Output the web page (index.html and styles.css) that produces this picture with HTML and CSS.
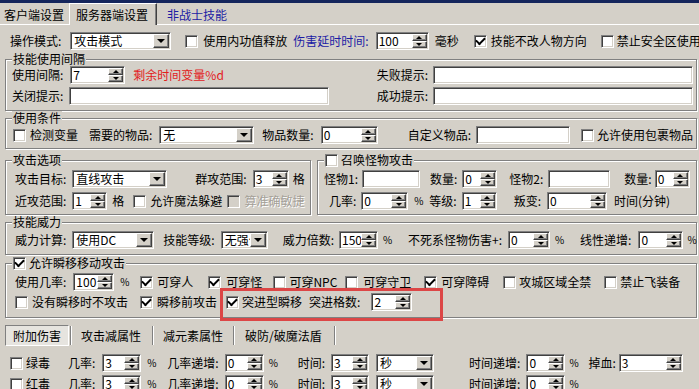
FILE: index.html
```html
<!DOCTYPE html>
<html lang="zh-CN">
<head>
<meta charset="utf-8">
<title>服务器端设置</title>
<link rel="stylesheet" href="styles.css">
</head>
<body>
<div class="win">
  <div class="topbar"></div>
  <div class="tabs">
    <div class="tab first">客户端设置</div>
    <div class="tab sel">服务器端设置</div>
    <div class="tab blue m10">非战士技能</div>
  </div>

  <div class="row r-top">
    <span class="m10">操作模式:</span>
    <div class="combo w101 m9"><span class="v">攻击模式</span><span class="db"></span></div>
    <span class="cb m14"></span><span class="m5">使用内功值释放</span>
    <span class="blue m6">伤害延时时间:</span>
    <div class="spin w53 m7"><span class="v">100</span><span class="sb"><i class="up"></i><i class="dn"></i></span></div>
    <span class="m6">毫秒</span>
    <span class="cb on m15"></span><span class="m4">技能不改人物方向</span>
    <span class="cb m14"></span><span class="m3">禁止安全区使用</span>
  </div>

  <div class="group g1">
    <div class="legend">技能使用间隔</div>
    <div class="row">
      <span class="m6">使用间隔:</span>
      <div class="spin w55 m7"><span class="v">7</span><span class="sb"><i class="up"></i><i class="dn"></i></span></div>
      <span class="red m8">剩余时间变量%d</span>
      <div class="right"><span>失败提示:</span><div class="field w260 m5"></div></div>
    </div>
    <div class="row mt3">
      <span class="m6">关闭提示:</span>
      <div class="field w260 m6"></div>
      <div class="right"><span>成功提示:</span><div class="field w260 m5"></div></div>
    </div>
  </div>

  <div class="group g2">
    <div class="legend">使用条件</div>
    <div class="row mt1">
      <span class="cb m7"></span><span class="m4">检测变量</span>
      <span class="m11">需要的物品:</span>
      <div class="combo w95 m7"><span class="v">无</span><span class="db"></span></div>
      <span class="m8">物品数量:</span>
      <div class="spin w57 m7"><span class="v">0</span><span class="sb"><i class="up"></i><i class="dn"></i></span></div>
      <span class="m30">自定义物品:</span>
      <div class="field w94 m5"></div>
      <span class="cb m11"></span><span class="m3">允许使用包裹物品</span>
    </div>
  </div>

  <div class="pair">
    <div class="group g3a">
      <div class="legend">攻击选项</div>
      <div class="row mt3">
        <span class="m9">攻击目标:</span>
        <div class="combo w95 m6"><span class="v">直线攻击</span><span class="db"></span></div>
        <span class="m28">群攻范围:</span>
        <div class="spin w36 m6"><span class="v">3</span><span class="sb"><i class="up"></i><i class="dn"></i></span></div>
        <span class="m4">格</span>
      </div>
      <div class="row mt4">
        <span class="m9">近攻范围:</span>
        <div class="spin w35 m6"><span class="v">1</span><span class="sb"><i class="up"></i><i class="dn"></i></span></div>
        <span class="m5">格</span>
        <span class="cb m9"></span><span class="m4">允许魔法躲避</span>
        <span class="cb dis m5"></span><span class="dis m4">算准确敏捷</span>
      </div>
    </div>
    <div class="group g3b">
      <div class="legend"><span class="cb"></span><span class="m3">召唤怪物攻击</span></div>
      <div class="row mt3">
        <span class="m6">怪物1:</span>
        <div class="field w58 m4"></div>
        <span class="m10">数量:</span>
        <div class="spin w35 m5"><span class="v">0</span><span class="sb"><i class="up"></i><i class="dn"></i></span></div>
        <span class="m12">怪物2:</span>
        <div class="field w62 m5"></div>
        <span class="m14">数量:</span>
        <div class="spin w35 m3"><span class="v">0</span><span class="sb"><i class="up"></i><i class="dn"></i></span></div>
      </div>
      <div class="row mt4">
        <span class="m11">几率:</span>
        <div class="spin w47 m5"><span class="v">0</span><span class="sb"><i class="up"></i><i class="dn"></i></span></div>
        <span class="pct m6">%</span>
        <span class="m7">等级:</span>
        <div class="spin w35 m5"><span class="v">1</span><span class="sb"><i class="up"></i><i class="dn"></i></span></div>
        <span class="m17">叛变:</span>
        <div class="spin w60 m6"><span class="v">0</span><span class="sb"><i class="up"></i><i class="dn"></i></span></div>
        <span class="m7">时间(分钟)</span>
      </div>
    </div>
  </div>

  <div class="group g4">
    <div class="legend">技能威力</div>
    <div class="row mt2">
      <span class="m9">威力计算:</span>
      <div class="combo w82 m6"><span class="v">使用DC</span><span class="db"></span></div>
      <span class="m9">技能等级:</span>
      <div class="combo w47 m6"><span class="v trunc">无强化</span><span class="db"></span></div>
      <span class="m15">威力倍数:</span>
      <div class="spin w39 m5"><span class="v">150</span><span class="sb"><i class="up"></i><i class="dn"></i></span></div>
      <span class="pct m5">%</span>
      <span class="m17">不死系怪物伤害+:</span>
      <div class="spin w42 m6"><span class="v">0</span><span class="sb"><i class="up"></i><i class="dn"></i></span></div>
      <span class="pct m5">%</span>
      <span class="m17">线性递增:</span>
      <div class="spin w45 m7"><span class="v">0</span><span class="sb"><i class="up"></i><i class="dn"></i></span></div>
      <span class="pct m4">%</span>
    </div>
  </div>

  <div class="group g5">
    <div class="legend"><span class="cb on"></span><span class="m3">允许瞬移移动攻击</span></div>
    <div class="row mt3">
      <span class="m9">使用几率:</span>
      <div class="spin w41 m7"><span class="v">100</span><span class="sb"><i class="up"></i><i class="dn"></i></span></div>
      <span class="pct m6">%</span>
      <span class="cb on m12"></span><span class="m4">可穿人</span>
      <span class="cb on m15"></span><span class="m5">可穿怪</span>
      <span class="cb m11"></span><span class="m3">可穿NPC</span>
      <span class="cb m8"></span><span class="m5">可穿守卫</span>
      <span class="cb on m13"></span><span class="m4">可穿障碍</span>
      <span class="cb m14"></span><span class="m3">攻城区域全禁</span>
      <span class="cb m13"></span><span class="m3">禁止飞装备</span>
    </div>
    <div class="row mt2">
      <span class="cb m9"></span><span class="m4">没有瞬移时不攻击</span>
      <span class="cb on m12"></span><span class="m4">瞬移前攻击</span>
      <span class="cb on m9"></span><span class="m3">突进型瞬移</span>
      <span class="m7">突进格数:</span>
      <div class="spin w41 m11"><span class="v">2</span><span class="sb"><i class="up"></i><i class="dn"></i></span></div>
    </div>
  </div>

  <div class="btabs">
    <div class="btab sel m5">附加伤害</div>
    <i class="sep m1"></i>
    <span class="m9">攻击减属性</span>
    <i class="sep m11"></i>
    <span class="m9">减元素属性</span>
    <i class="sep m10"></i>
    <span class="m10">破防/破魔法盾</span>
    <i class="sep m12"></i>
  </div>

  <div class="row mt8">
    <span class="cb m10"></span><span class="m3">绿毒</span>
    <span class="m18">几率:</span>
    <div class="spin w39 m7"><span class="v">3</span><span class="sb"><i class="up"></i><i class="dn"></i></span></div>
    <span class="pct m6">%</span>
    <span class="m12">几率递增:</span>
    <div class="spin w39 m6"><span class="v">0</span><span class="sb"><i class="up"></i><i class="dn"></i></span></div>
    <span class="pct m5">%</span>
    <span class="m21">时间:</span>
    <div class="spin w38 m6"><span class="v">3</span><span class="sb"><i class="up"></i><i class="dn"></i></span></div>
    <div class="combo w58 m7"><span class="v">秒</span><span class="db"></span></div>
    <span class="m35">时间递增:</span>
    <div class="spin w39 m6"><span class="v">0</span><span class="sb"><i class="up"></i><i class="dn"></i></span></div>
    <span class="pct m4">%</span>
    <span class="m11">掉血:</span>
    <div class="spin w64 m3"><span class="v">3</span><span class="sb"><i class="up"></i><i class="dn"></i></span></div>
  </div>
  <div class="row mt3">
    <span class="cb m10"></span><span class="m3">红毒</span>
    <span class="m18">几率:</span>
    <div class="spin w39 m7"><span class="v">3</span><span class="sb"><i class="up"></i><i class="dn"></i></span></div>
    <span class="pct m6">%</span>
    <span class="m12">几率递增:</span>
    <div class="spin w39 m6"><span class="v">0</span><span class="sb"><i class="up"></i><i class="dn"></i></span></div>
    <span class="pct m5">%</span>
    <span class="m21">时间:</span>
    <div class="spin w38 m6"><span class="v">3</span><span class="sb"><i class="up"></i><i class="dn"></i></span></div>
    <div class="combo w58 m7"><span class="v">秒</span><span class="db"></span></div>
    <span class="m35">时间递增:</span>
    <div class="spin w39 m6"><span class="v">0</span><span class="sb"><i class="up"></i><i class="dn"></i></span></div>
    <span class="pct m4">%</span>
  </div>

  <div class="mark"></div>
</div>
</body>
</html>
```

FILE: styles.css
```css
* { box-sizing: border-box; }
body {
  margin: 0;
  background: #d4d0c8;
  font: 12px/14px "Noto Sans CJK SC", "Noto Sans CJK TC", sans-serif;
  color: #000;
}
.win {
  position: relative;
  width: 699px;
  height: 389px;
  overflow: hidden;
  background: #d4d0c8;
}
.topbar { height: 3px; background: #14255c; }

/* top tab strip */
.tabs {
  display: flex;
  align-items: flex-end;
  height: 22px;
  border-bottom: 1px solid #fff;
}
.tab {
  display: flex;
  align-items: center;
  height: 19px;
  white-space: nowrap;
  flex-shrink: 0;
}
.tab.first { width: 69px; padding-left: 4px; }
.tab.sel {
  width: 88px;
  height: 22px;
  margin-bottom: -1px;
  padding-left: 6px;
  background: #d4d0c8;
  border-left: 1px solid #fff;
  border-top: 1px solid #fff;
  border-right: 1px solid #404040;
  box-shadow: inset -1px 0 #808080;
}

/* generic rows */
.row {
  display: flex;
  align-items: center;
  height: 18px;
}
.row > *, .legend > *, .right > *, .btabs > * { flex-shrink: 0; white-space: nowrap; }
.r-top { margin-top: 7px; }
.right { display: flex; align-items: center; margin-left: auto; margin-right: 3px; }

/* group boxes */
.group {
  border: 1px solid #808080;
  box-shadow: inset 1px 1px #fff, 1px 1px #fff;
  margin: 0 2px 0 5px;
}
.legend {
  display: flex;
  align-items: center;
  width: max-content;
  height: 14px;
  margin: -8px 0 0 6px;
  padding: 0 1px;
  background: #d4d0c8;
}
.g1 { margin-top: 9px; padding-bottom: 5px; }
.g2 { margin-top: 7px; padding-bottom: 4px; }
.pair { display: flex; gap: 6px; margin: 11px 2px 0 5px; }
.pair .group { margin: 0; padding-bottom: 4px; }
.g3a { width: 306px; }
.g3b { flex: 1; }
.g4 { margin-top: 7px; padding-bottom: 5px; }
.g5 { margin-top: 8px; padding-bottom: 6px; }

/* sunken field */
.field, .spin, .combo {
  height: 18px;
  background: #fff;
  border: 1px solid;
  border-color: #808080 #fff #fff #808080;
  box-shadow: inset 1px 1px #404040, inset -1px -1px #d4d0c8;
}
.spin, .combo { display: flex; align-items: stretch; padding: 1px; }
.spin .v, .combo .v {
  flex: 1;
  min-width: 0;
  display: flex;
  align-items: center;
  white-space: nowrap;
  padding-left: 1px;
}
.combo .v { padding-left: 2px; }
.combo .v.trunc { overflow-x: clip; }
.sb { display: flex; flex-direction: column; width: 15px; }
.sb i {
  flex: 1;
  display: flex;
  align-items: center;
  justify-content: center;
  background: #d4d0c8;
  border: 1px solid;
  border-color: #fff #404040 #404040 #fff;
  box-shadow: inset -1px -1px #808080;
}
.sb .up::after {
  content: "";
  border-left: 3px solid transparent;
  border-right: 3px solid transparent;
  border-bottom: 3px solid #000;
}
.sb .dn::after {
  content: "";
  border-left: 3px solid transparent;
  border-right: 3px solid transparent;
  border-top: 3px solid #000;
}
.db {
  width: 16px;
  display: flex;
  align-items: center;
  justify-content: center;
  background: #d4d0c8;
  border: 1px solid;
  border-color: #fff #404040 #404040 #fff;
  box-shadow: inset -1px -1px #808080;
}
.db::after {
  content: "";
  border-left: 4px solid transparent;
  border-right: 4px solid transparent;
  border-top: 4px solid #000;
}

/* checkbox */
.cb {
  display: inline-flex;
  align-items: center;
  justify-content: center;
  width: 13px;
  height: 13px;
  background: #fff;
  border: 1px solid;
  border-color: #808080 #fff #fff #808080;
  box-shadow: inset 1px 1px #404040, inset -1px -1px #d4d0c8;
}
.cb.on::after {
  content: "";
  width: 7px;
  height: 4px;
  margin-top: -2px;
  border-left: 2px solid #000;
  border-bottom: 2px solid #000;
  transform: rotate(-45deg);
}
.cb.dis { background: #d4d0c8; }

/* text variants */
.blue { color: #1c1ca4; }
.red { color: #e2201c; }
span.dis { color: #a4a098; text-shadow: 1px 1px #fff; }
.pct { width: 8px; font-size: 10px; text-align: center; }

/* lower tab strip */
.btabs {
  display: flex;
  align-items: center;
  height: 21px;
  margin-top: 7px;
}
.btab.sel {
  display: flex;
  align-items: center;
  justify-content: center;
  width: 64px;
  height: 21px;
  background: #e6e4df;
  border: 1px solid;
  border-color: #808080 #fff #fff #808080;
}
.sep {
  width: 2px;
  height: 19px;
  border-left: 1px solid #808080;
  border-right: 1px solid #fff;
}

/* annotation frame */
.mark {
  position: absolute;
  left: 220px;
  top: 288px;
  width: 223px;
  height: 33px;
  border: 3px solid #dc4646;
}

/* spacing helpers */
.m1 { margin-left: 1px; }
.m3 { margin-left: 3px; }
.m4 { margin-left: 4px; }
.m5 { margin-left: 5px; }
.m6 { margin-left: 6px; }
.m7 { margin-left: 7px; }
.m8 { margin-left: 8px; }
.m9 { margin-left: 9px; }
.m10 { margin-left: 10px; }
.m11 { margin-left: 11px; }
.m12 { margin-left: 12px; }
.m13 { margin-left: 13px; }
.m14 { margin-left: 14px; }
.m15 { margin-left: 15px; }
.m17 { margin-left: 17px; }
.m18 { margin-left: 18px; }
.m21 { margin-left: 21px; }
.m28 { margin-left: 28px; }
.m30 { margin-left: 30px; }
.m35 { margin-left: 35px; }
.mt1 { margin-top: 1px; }
.mt2 { margin-top: 2px; }
.mt3 { margin-top: 3px; }
.mt4 { margin-top: 4px; }
.mt8 { margin-top: 8px; }

/* control widths */
.w35 { width: 35px; }
.w36 { width: 36px; }
.w38 { width: 38px; }
.w39 { width: 39px; }
.w41 { width: 41px; }
.w42 { width: 42px; }
.w45 { width: 45px; }
.w47 { width: 47px; }
.w53 { width: 53px; }
.w55 { width: 55px; }
.w57 { width: 57px; }
.w58 { width: 58px; }
.w60 { width: 60px; }
.w62 { width: 62px; }
.w64 { width: 64px; }
.w82 { width: 82px; }
.w94 { width: 94px; }
.w95 { width: 95px; }
.w101 { width: 101px; }
.w260 { width: 260px; }
```
